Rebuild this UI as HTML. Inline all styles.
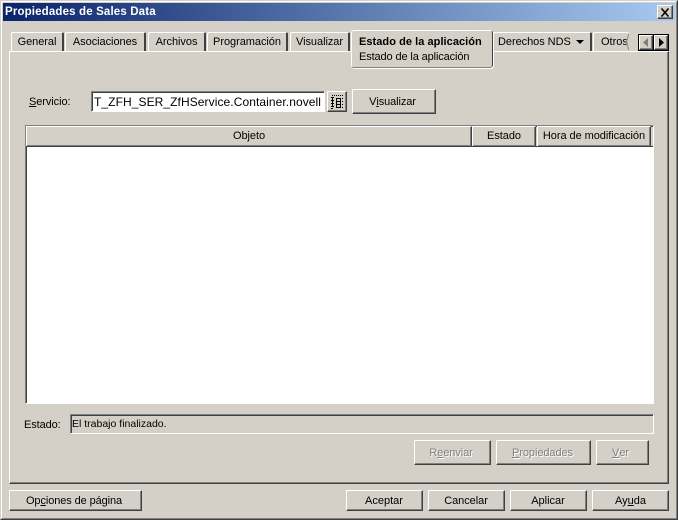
<!DOCTYPE html>
<html><head><meta charset="utf-8">
<style>
html,body{margin:0;padding:0;background:#d4d0c8;}
#w{position:relative;width:678px;height:520px;overflow:hidden;background:#d4d0c8;font:11px "Liberation Sans",sans-serif;color:#000;}
#w div,#w span.a{position:absolute;box-sizing:border-box;}
.t{white-space:nowrap;line-height:13px;}
.b{background:#d4d0c8;border:1px solid;border-color:#fff #404040 #404040 #fff;box-shadow:inset -1px -1px 0 #808080;display:flex;align-items:center;justify-content:center;white-space:nowrap;}
.dis{color:#808080;text-shadow:1px 1px 0 #fff;letter-spacing:-.08px;}
.tab{background:#d4d0c8;border-top:1px solid #fff;border-left:1px solid #fff;border-right:2px solid #404040;border-radius:2px 2px 0 0;height:19px;top:32px;text-align:center;line-height:19px;white-space:nowrap;letter-spacing:-.05px;}
.h{background:#d4d0c8;border:1px solid;border-color:#fff #404040 #404040 #fff;box-shadow:inset -1px -1px 0 #808080;top:126px;height:21px;text-align:center;line-height:18px;white-space:nowrap;letter-spacing:-.06px;}
u{text-decoration:underline;}
</style></head><body>
<div id="w">
<!-- window frame -->
<div style="left:0;top:0;width:678px;height:520px;border:1px solid;border-color:#d4d0c8 #404040 #404040 #d4d0c8;"></div>
<div style="left:1px;top:1px;width:676px;height:518px;border:1px solid;border-color:#fff #808080 #808080 #fff;"></div>
<!-- title -->
<div style="left:3px;top:3px;width:672px;height:18px;background:linear-gradient(90deg,#0a246a,#a6caf0);"></div>
<div class="t" style="left:5px;top:6px;color:#fff;font-weight:bold;font-size:11.5px;letter-spacing:.15px;">Propiedades de Sales Data</div>
<div class="b" style="left:657px;top:5px;width:16px;height:14px;">
<svg width="10" height="9" viewBox="0 0 10 9" style="display:block"><path d="M1.500 0.500L8.500 8.500M8.500 0.500L1.500 8.500" stroke="#000" stroke-width="1.600" fill="none"/></svg></div>
<!-- panel -->
<div style="left:9px;top:51px;width:660px;height:433px;border:1px solid;border-color:#fff #404040 #404040 #fff;box-shadow:inset -1px -1px 0 #808080;"></div>
<!-- tabs -->
<div class="tab" style="left:11px;width:53px;">General</div>
<div class="tab" style="left:65px;width:81px;">Asociaciones</div>
<div class="tab" style="left:148px;width:58px;">Archivos</div>
<div class="tab" style="left:207px;width:81px;">Programación</div>
<div class="tab" style="left:290px;width:60px;">Visualizar</div>
<div class="tab" style="left:493px;width:99px;text-align:left;padding-left:4px;">Derechos NDS</div>
<svg style="position:absolute;left:576px;top:40px" width="9" height="5"><path d="M0 0h8L4 4z" fill="#000"/></svg>
<div class="tab" style="left:593px;width:36px;border-right:0;text-align:left;padding-left:7px;letter-spacing:0;">Otros</div>
<svg style="position:absolute;left:626px;top:33px" width="4" height="18"><path d="M2.500 1C2.500 5 .5 6 .5 9s2 4 2 8" stroke="#8a8a84" fill="none"/></svg>
<!-- active tab -->
<div style="left:351px;top:30px;width:142px;height:38px;background:#d4d0c8;border:1px solid;border-color:#fff #404040 #808080 #fff;border-radius:3px;box-shadow:1px 1px 0 #fff;"></div>
<div class="t" style="left:359px;top:35px;font-weight:bold;letter-spacing:.05px;padding-top:1px;">Estado de la aplicación</div>
<div class="t" style="left:359px;top:51px;letter-spacing:-.12px;">Estado de la aplicación</div>
<!-- tab scroll -->
<div style="left:638px;top:34px;width:31px;height:17px;background:#000;"></div>
<div class="b" style="left:639px;top:35px;width:14px;height:15px;border-width:1px;">
<svg width="6" height="9"><path d="M5 0v9L0 4.500z" fill="#808080"/></svg></div>
<div class="b" style="left:654px;top:35px;width:14px;height:15px;">
<svg width="6" height="9"><path d="M1 0v9l5-4.500z" fill="#000"/></svg></div>
<!-- servicio -->
<div class="t" style="left:29px;top:96px;letter-spacing:-.08px;"><u>S</u>ervicio:</div>
<div style="left:91px;top:91px;width:234px;height:21px;background:#fff;border:1px solid;border-color:#808080 #fff #fff #808080;box-shadow:inset 1px 1px 0 #404040;"></div>
<div class="t" style="left:94px;top:96px;font-size:12px;letter-spacing:.08px;">T_ZFH_SER_ZfHService.Container.novell</div>
<div class="b" style="left:327px;top:91px;width:20px;height:21px;">
<svg width="12" height="14" viewBox="0 0 12 14"><path d="M1 0h1v1H1zM3 0h1v1H3zM5 0h1v1H5zM7 0h1v1H7zM9 0h1v1H9zM11 0h1v1h-1zM0 2h3v1H0zM0 5h3v1H0zM0 8h3v1H0zM0 11h3v1H0zM0 13h2v1H0zM1 3h1v2H1zM1 6h1v2H1zM1 9h1v2H1zM5 3h5v1H5zM5 6h5v1H5zM5 9h5v1H5zM5 12h5v1H5zM5 3h1v10H5zM9 3h1v10H9zM11 3h1v1h-1zM11 6h1v1h-1zM11 9h1v1h-1zM11 12h1v1h-1z" fill="#000"/></svg></div>
<div class="b" style="left:352px;top:89px;width:84px;height:25px;padding-right:3px;letter-spacing:-.1px;">V<u>i</u>sualizar</div>
<!-- table -->
<div style="left:25px;top:125px;width:629px;height:279px;background:#fff;border:1px solid;border-color:#808080 #fff #fff #808080;box-shadow:inset 1px 1px 0 #404040;"></div>
<div style="left:27px;top:127px;width:626px;height:19px;background:#d4d0c8;"></div>
<div class="h" style="left:26px;width:446px;">Objeto</div>
<div class="h" style="left:472px;width:64px;">Estado</div>
<div class="h" style="left:537px;width:114px;">Hora de modificación</div>
<div style="left:26px;top:146px;width:627px;height:1px;background:#404040;"></div>
<!-- estado -->
<div class="t" style="left:24px;top:419px;letter-spacing:-.1px;">Estado:</div>
<div style="left:70px;top:414px;width:584px;height:20px;border:1px solid;border-color:#808080 #fff #fff #808080;box-shadow:inset 1px 1px 0 #404040;"></div>
<div class="t" style="left:72px;top:418px;font-size:10.500px;">El trabajo finalizado.</div>
<!-- actions -->
<div class="b dis" style="left:414px;top:440px;width:77px;height:25px;padding-right:3px;">R<u>e</u>enviar</div>
<div class="b dis" style="left:496px;top:440px;width:95px;height:25px;padding-right:2px;"><u>P</u>ropiedades</div>
<div class="b dis" style="left:596px;top:440px;width:53px;height:25px;padding-right:4px;"><u>V</u>er</div>
<!-- bottom -->
<div class="b" style="left:9px;top:490px;width:133px;height:21px;padding-right:3px;padding-top:1px;letter-spacing:-.1px;">Op<u>c</u>iones de página</div>
<div class="b" style="left:346px;top:490px;width:77px;height:21px;padding-right:1px;padding-top:1px;">Aceptar</div>
<div class="b" style="left:428px;top:490px;width:77px;height:21px;padding-right:1px;padding-top:1px;letter-spacing:-.05px;">Cancelar</div>
<div class="b" style="left:510px;top:490px;width:77px;height:21px;padding-right:1px;padding-top:1px;">Aplicar</div>
<div class="b" style="left:592px;top:490px;width:77px;height:21px;padding-top:1px;">Ay<u>u</u>da</div>
</div>
</body></html>
